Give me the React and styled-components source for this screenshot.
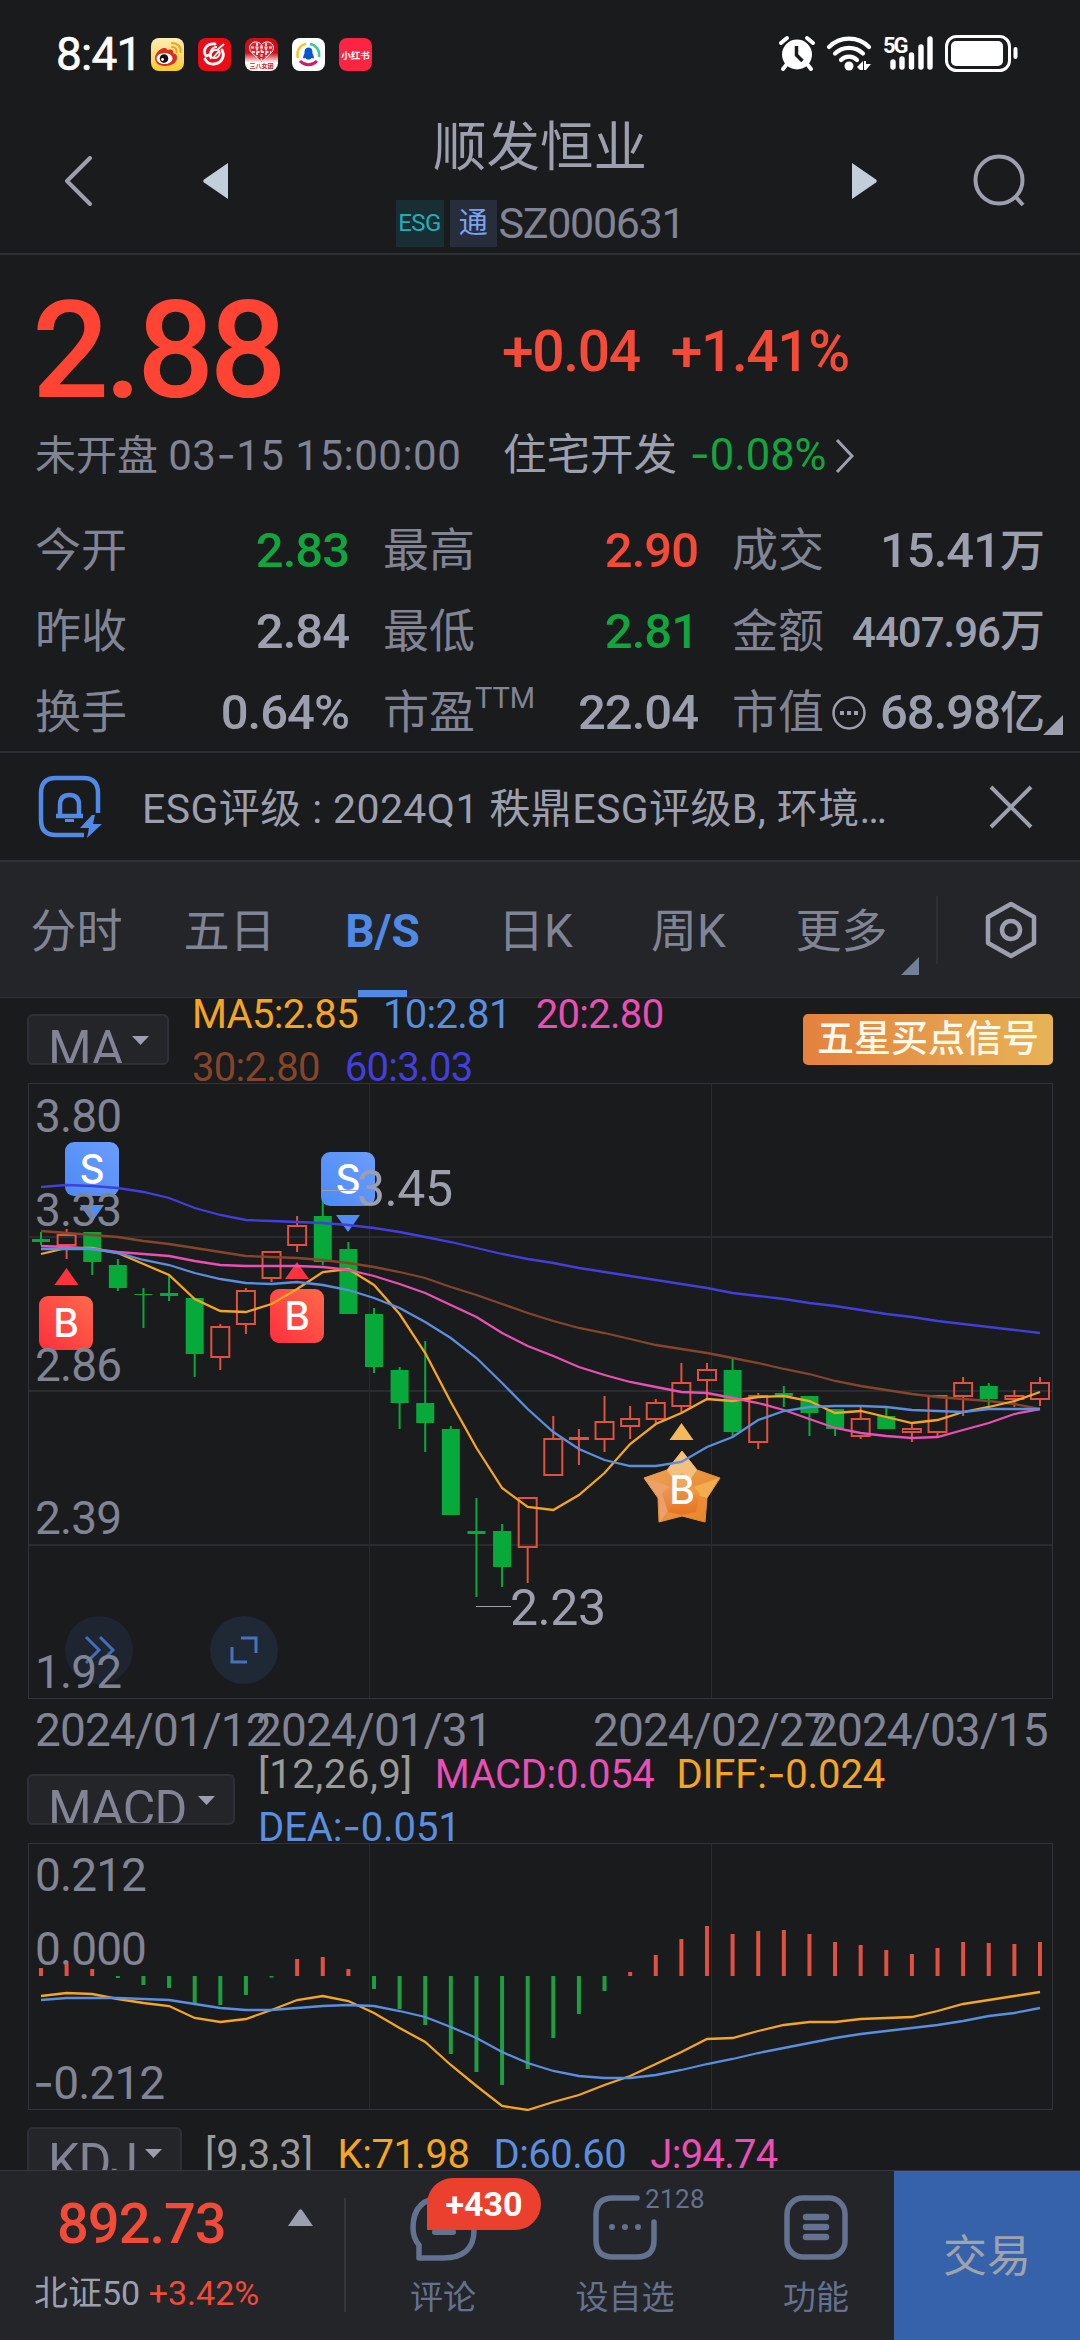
import React from "react";
import styled, { createGlobalStyle } from "styled-components";

const COLORS = {
  bg: "#1a1b1d",
  panel: "#232529",
  line: "#2e3036",
  label: "#808494",
  value: "#9c9fae",
  red: "#f44a38",
  green: "#13a53d",
  blue: "#5089e6",
  orange: "#f5a524",
  sky: "#5a8fdf",
  pink: "#e94fb4",
  brown: "#86452a",
  indigo: "#423fdc",
  slate: "#637290",
};

const FONT = 'Roboto, "Noto Sans CJK SC", sans-serif';

/* ---------- chart data ---------- */

const STEP = 25.615;
const xAt = (i) => 41 + i * STEP;

// [up, high, top, bottom, low]
const CANDLES = [
  [0, 1232, 1239, 1242, 1245],
  [1, 1229, 1234, 1246, 1259],
  [0, 1232, 1232, 1262, 1275],
  [0, 1259, 1265, 1288, 1291],
  [0, 1288, 1294, 1295, 1328],
  [0, 1275, 1293, 1296, 1301],
  [0, 1298, 1298, 1354, 1377],
  [1, 1324, 1326, 1358, 1370],
  [1, 1288, 1290, 1325, 1334],
  [1, 1251, 1251, 1279, 1282],
  [1, 1216, 1225, 1246, 1252],
  [0, 1186, 1216, 1262, 1265],
  [0, 1242, 1249, 1314, 1314],
  [0, 1308, 1314, 1367, 1373],
  [0, 1367, 1370, 1403, 1429],
  [0, 1341, 1403, 1423, 1452],
  [0, 1426, 1429, 1515, 1515],
  [0, 1498, 1531, 1534, 1597],
  [0, 1524, 1531, 1567, 1587],
  [1, 1497, 1497, 1548, 1583],
  [1, 1416, 1438, 1476, 1476],
  [1, 1429, 1437, 1440, 1465],
  [1, 1396, 1421, 1440, 1452],
  [1, 1406, 1418, 1427, 1439],
  [1, 1399, 1402, 1420, 1424],
  [1, 1363, 1382, 1407, 1412],
  [1, 1363, 1369, 1381, 1400],
  [0, 1357, 1370, 1432, 1437],
  [1, 1393, 1395, 1443, 1449],
  [0, 1386, 1393, 1396, 1407],
  [0, 1396, 1396, 1413, 1436],
  [0, 1409, 1409, 1429, 1436],
  [1, 1406, 1418, 1437, 1439],
  [0, 1407, 1416, 1429, 1429],
  [1, 1423, 1428, 1433, 1442],
  [1, 1395, 1395, 1433, 1436],
  [1, 1377, 1382, 1397, 1416],
  [0, 1383, 1386, 1399, 1407],
  [1, 1390, 1395, 1400, 1407],
  [1, 1377, 1382, 1400, 1406],
];

const AVERAGES = [
  {
    color: COLORS.indigo,
    ys: [1187, 1185, 1186, 1188, 1192, 1198, 1208, 1215, 1220, 1221, 1222, 1223, 1225, 1228, 1232, 1237, 1242, 1248, 1254, 1259, 1263, 1268, 1272, 1276, 1280, 1284, 1288, 1293, 1296, 1299, 1303, 1306, 1310, 1314, 1317, 1321, 1324, 1327, 1330, 1333],
  },
  {
    color: COLORS.brown,
    ys: [1231, 1233, 1235, 1237, 1241, 1244, 1248, 1252, 1256, 1257, 1258, 1260, 1263, 1267, 1272, 1278, 1287, 1295, 1304, 1313, 1321, 1328, 1333, 1339, 1345, 1349, 1353, 1358, 1363, 1369, 1374, 1381, 1386, 1390, 1394, 1397, 1399, 1401, 1404, 1409],
  },
  {
    color: COLORS.orange,
    ys: [1254, 1248, 1248, 1253, 1264, 1275, 1299, 1311, 1312, 1304, 1289, 1272, 1269, 1285, 1314, 1353, 1402, 1448, 1488, 1507, 1510, 1495, 1473, 1444, 1424, 1413, 1399, 1401, 1397, 1396, 1401, 1413, 1411, 1417, 1423, 1420, 1412, 1407, 1401, 1392],
  },
  {
    color: COLORS.pink,
    ys: [1246, 1247, 1249, 1252, 1254, 1256, 1261, 1265, 1266, 1266, 1266, 1267, 1270, 1276, 1284, 1293, 1305, 1317, 1333, 1346, 1356, 1367, 1375, 1382, 1387, 1392, 1393, 1398, 1403, 1410, 1419, 1428, 1433, 1436, 1438, 1437, 1430, 1423, 1414, 1409],
  },
  {
    color: COLORS.sky,
    ys: [1249, 1249, 1249, 1253, 1260, 1265, 1273, 1279, 1283, 1284, 1282, 1285, 1290, 1298, 1308, 1322, 1338, 1358, 1383, 1409, 1432, 1449, 1460, 1466, 1466, 1462, 1447, 1437, 1420, 1411, 1407, 1406, 1406, 1407, 1410, 1411, 1412, 1409, 1409, 1409],
  },
];

const MACD_ZERO = 1976;
const MACD_BARS = [1968, 1964, 1969, 1978, 1985, 1988, 2004, 2005, 1995, 1977.5, 1959, 1957, 1969, 1989, 2009, 2025, 2054, 2072, 2085, 2069, 2038, 2014, 1991, 1972, 1955, 1939, 1926, 1934, 1931, 1930, 1934, 1942, 1945, 1950, 1954, 1948, 1942, 1943, 1944, 1942];
const DIFF = [1996, 1993, 1994, 1999, 2003, 2006, 2018, 2022, 2019, 2010, 2000, 1996, 2001, 2013, 2028, 2042, 2065, 2086, 2106, 2110, 2102, 2095, 2085, 2076, 2064, 2052, 2039, 2038, 2031, 2025, 2022, 2022, 2019, 2018, 2017, 2011, 2004, 2000, 1996, 1992];
const DEA = [2000, 1998, 1998, 1998, 1999, 2000, 2004, 2008, 2010, 2010, 2008, 2006, 2005, 2006, 2011, 2017, 2027, 2038, 2052, 2063, 2071, 2076, 2078, 2078, 2075, 2070, 2064, 2059, 2053, 2048, 2043, 2038, 2034, 2031, 2028, 2025, 2021, 2016, 2013, 2008];

const toPoints = (ys) => ys.map((y, i) => `${xAt(i).toFixed(1)},${y}`).join(" ");

const STATS = [
  { label: "今开", value: "2.83", color: COLORS.green },
  { label: "最高", value: "2.90", color: COLORS.red },
  { label: "成交", value: "15.41", unit: "万" },
  { label: "昨收", value: "2.84" },
  { label: "最低", value: "2.81", color: COLORS.green },
  { label: "金额", value: "4407.96", unit: "万", small: true },
  { label: "换手", value: "0.64%" },
  { label: "市盈", sup: "TTM", value: "22.04" },
  { label: "市值", more: true, value: "68.98", unit: "亿" },
];

const TABS = ["分时", "五日", "B/S", "日K", "周K", "更多"];

/* ---------- status bar ---------- */

const AppIcons = () => (
  <AppIconRow>
    <svg width="33" height="33" viewBox="0 0 33 33">
      <defs>
        <linearGradient id="weibo" x1="0" y1="0" x2="0" y2="1">
          <stop offset="0" stopColor="#fdeebb" />
          <stop offset="1" stopColor="#fccb2d" />
        </linearGradient>
      </defs>
      <rect width="33" height="33" rx="8" fill="url(#weibo)" />
      <path d="M4 20c0-5 6-11 10-10 2 0 2 2 2 2 3-1 7-1 6 3 3 1 4 2 4 5 0 5-6 8-12 8S4 25 4 20z" fill="#dc2b21" />
      <ellipse cx="13.500" cy="20.500" rx="8" ry="5.600" fill="#fff" />
      <circle cx="13" cy="20.500" r="4.300" fill="#111" />
      <circle cx="11.500" cy="21.500" r="1.400" fill="#fff" />
      <path d="M21 5c5 0 9 3 8.500 9M21 9c3 0 5 2 4.500 5" fill="none" stroke="#f0a020" strokeWidth="2" strokeLinecap="round" />
    </svg>
    <svg width="33" height="33" viewBox="0 0 33 33">
      <rect width="33" height="33" rx="8" fill="#ec0c18" />
      <path d="M17 6C8 5 4 13 8 18l3-1M7 21c3 7 15 7 18-2 1-3 0-5-1-7" fill="none" stroke="#fff" strokeWidth="2.800" strokeLinecap="round" />
      <path d="M26 6 19 12c-6-1-8 7-4 8 5 1 8-4 6-7l-6 7M19 9c-6 0-9 7-6 12" fill="none" stroke="#fff" strokeWidth="1.800" />
    </svg>
    <svg width="33" height="33" viewBox="0 0 33 33">
      <defs>
        <linearGradient id="heart" x1="0" y1="0" x2="0" y2="1">
          <stop offset="0.450" stopColor="#cc0f18" />
          <stop offset="0.750" stopColor="#fff" />
        </linearGradient>
      </defs>
      <rect width="33" height="33" rx="8" fill="url(#heart)" />
      <path d="M16.500 24 6 14C1 7 10 0 16.500 6.500 23 0 32 7 27 14z" fill="#dc2430" stroke="#fff" strokeWidth="1" />
      <path d="M16.500 7v16M12 5v14M21 5v14M6 9.500h21M7 14h19" stroke="#ffe4e4" strokeWidth="1.800" strokeDasharray="3 1.500" />
      <text x="16.500" y="30" fontSize="6" fontWeight="700" textAnchor="middle" fill="#c2242b">三八女团</text>
    </svg>
    <svg width="33" height="33" viewBox="0 0 33 33">
      <rect width="33" height="33" rx="8" fill="#fff" />
      <path d="M6 20C4 13 8 7 14 6" fill="none" stroke="#f4c62f" strokeWidth="2.600" />
      <path d="M18 6c6 1 10 6 9 13" fill="none" stroke="#3ecb9b" strokeWidth="2.600" />
      <path d="M8 23c5 5 12 5 17 0" fill="none" stroke="#d4186c" strokeWidth="3" />
      <path d="M16.500 9.500c-4 0-4 4-4 6-1 2-2 4-1 5l2-.5c1 2 5 2 6 0l2 .5c1-1 0-3-1-5 0-2 0-6-4-6z" fill="#0b54d4" />
    </svg>
    <svg width="33" height="33" viewBox="0 0 33 33">
      <rect width="33" height="33" rx="8" fill="#fb2442" />
      <text x="16.500" y="20.500" fontSize="9.500" fontWeight="700" textAnchor="middle" fill="#fff">小红书</text>
    </svg>
  </AppIconRow>
);

const SystemIcons = () => (
  <svg width="240" height="40" viewBox="778 34 240 40">
    <circle cx="797" cy="54.500" r="15" fill="#fff" />
    <path d="M781 43l6-5M813 43l-6-5M787 64l-4 5M807 64l4 5" stroke="#fff" strokeWidth="4" strokeLinecap="round" />
    <path d="M796.500 46v9l6 6" fill="none" stroke={COLORS.bg} strokeWidth="3.500" />
    <path d="M829 47a28 28 0 0 1 40 0M835 53.500a20 20 0 0 1 28 0M841 60a11 11 0 0 1 16 0" fill="none" stroke="#fff" strokeWidth="4.200" strokeLinecap="round" />
    <circle cx="849" cy="66" r="4.500" fill="#fff" />
    <path d="M857 67l6-6v9h-3zM864 61h2v3l5 0-5 6h-2z" fill="#fff" />
    <Net x="883" y="53">5G</Net>
    <path d="M893 62v5M902 59v8M911.500 55v12M921 47v20M930 39v28" stroke="#fff" strokeWidth="5.400" strokeLinecap="round" />
    <rect x="946.500" y="36.500" width="63" height="34" rx="10" fill="none" stroke="#fff" strokeWidth="3" />
    <rect x="951" y="41" width="52" height="25" rx="5" fill="#fff" />
    <path d="M1015.500 49v8" stroke="#fff" strokeWidth="4" strokeLinecap="round" />
  </svg>
);

/* ---------- charts ---------- */

const Candle = ({ index, data }) => {
  const [up, high, top, bottom, low] = data;
  const x = xAt(index);
  if (up) {
    return (
      <g stroke="#e2513f" strokeWidth="2" fill="none">
        <path d={`M${x} ${high}V${top}M${x} ${bottom}V${low}`} />
        <rect x={x - 9} y={top + 1} width="18" height={Math.max(bottom - top - 2, 1)} />
      </g>
    );
  }
  return (
    <g fill="#07a93a">
      <rect x={x - 1} y={high} width="2" height={low - high} />
      <rect x={x - 9} y={top} width="18" height={bottom - top} />
    </g>
  );
};

const Signal = ({ kind, x, y, tipX, tipY }) => (
  <g>
    <path
      d={kind === "S" ? `M${tipX - 12} ${tipY - 16}h24l-12 17z` : `M${tipX - 12} ${tipY + 17}h24l-12 -17z`}
      fill={kind === "S" ? "#4f8ef0" : "#ff333d"}
    />
    <rect x={x} y={y} width="54" height="54" rx="9" fill={`url(#signal${kind})`} />
    <SignalText x={x + 27} y={y + 41}>
      {kind}
    </SignalText>
  </g>
);

const PriceChart = () => (
  <Chart width="1080" height="675" viewBox="0 1083 1080 675">
    <defs>
      <linearGradient id="signalS" x1="1" y1="0" x2="0" y2="1">
        <stop offset="0" stopColor="#6b9dfb" />
        <stop offset="1" stopColor="#4c8af5" />
      </linearGradient>
      <linearGradient id="signalB" x1="1" y1="0" x2="0" y2="1">
        <stop offset="0" stopColor="#ff6a4c" />
        <stop offset="1" stopColor="#ff2e3c" />
      </linearGradient>
      <linearGradient id="star" x1="0" y1="0" x2="1" y2="1">
        <stop offset="0" stopColor="#eea45c" />
        <stop offset="1" stopColor="#e88426" />
      </linearGradient>
      <linearGradient id="starCore" x1="0" y1="0" x2="0" y2="1">
        <stop offset="0" stopColor="#efae62" />
        <stop offset="1" stopColor="#e5691a" />
      </linearGradient>
    </defs>
    <g stroke="#292b30" fill="none">
      <path d="M28 1237h1025M28 1391h1025M28 1545h1025" strokeWidth="2" />
      <path d="M369.500 1084v614M711.500 1084v614" />
      <rect x="28.500" y="1083.500" width="1024" height="615" stroke="#313338" />
    </g>
    <circle cx="99" cy="1650" r="34" fill="#1e2430" />
    <path d="M86 1637l13 13-13 13M100 1637l13 13-13 13" fill="none" stroke="#416fb9" strokeWidth="3" />
    <circle cx="244" cy="1650" r="34" fill="#1f2936" />
    <path d="M241 1638h15v15M232 1647v15h15" fill="none" stroke="#4474bd" strokeWidth="3" />
    {CANDLES.map((data, i) => (
      <Candle key={i} index={i} data={data} />
    ))}
    <Signal kind="S" x={65} y={1142} tipX={92} tipY={1221} />
    <Signal kind="S" x={321} y={1152} tipX={348} tipY={1231} />
    <Signal kind="B" x={39} y={1296} tipX={66.500} tipY={1268} />
    <Signal kind="B" x={270} y={1289} tipX={297} tipY={1262} />
    <path d="M669.500 1440h24l-12-17z" fill="#f5b85a" />
    <path d="M682 1451l15 19 23 8-13 20-2 24-23-6-23 6-1-24-14-20 23-8z" fill="url(#star)" stroke="url(#star)" strokeLinejoin="round" />
    <path d="M682 1451l15 19-15 21-15-21z" fill="#f3c07e" />
    <path d="M645 1478l37 13-22 31-1-24z" fill="#eca06a" />
    <path d="M719 1478l-37 13 25 7z" fill="#f2ae4c" />
    <path d="M682 1472l18 22-4 18-14 3-14-3-6-18z" fill="url(#starCore)" opacity="0.700" />
    <SignalText x="682" y="1504">B</SignalText>
    <g fill="none" strokeWidth="2.300">
      {AVERAGES.map((line) => (
        <polyline key={line.color} points={toPoints(line.ys)} stroke={line.color} />
      ))}
    </g>
    <path d="M322 1190.500h36M476 1606.500h35" stroke={COLORS.value} />
    <MarkText x="357" y="1206">3.45</MarkText>
    <MarkText x="510" y="1625">2.23</MarkText>
    <AxisText x="35" y="1132">3.80</AxisText>
    <AxisText x="35" y="1226">3.33</AxisText>
    <AxisText x="35" y="1381">2.86</AxisText>
    <AxisText x="35" y="1534">2.39</AxisText>
    <AxisText x="35" y="1688">1.92</AxisText>
    <AxisText x="35" y="1746">2024/01/12</AxisText>
    <AxisText x="256" y="1746">2024/01/31</AxisText>
    <AxisText x="593" y="1746">2024/02/27</AxisText>
    <AxisText x="812" y="1746">2024/03/15</AxisText>
  </Chart>
);

const MacdChart = () => (
  <Chart width="1080" height="268" viewBox="0 1843 1080 268">
    <g stroke="#292b30" fill="none">
      <path d="M369.500 1843v266M711.500 1843v266" />
      <rect x="28.500" y="1843.500" width="1024" height="266" stroke="#313338" />
    </g>
    <AxisText x="35" y="1891">0.212</AxisText>
    <AxisText x="35" y="1965">0.000</AxisText>
    <AxisText x="33" y="2099">
      <MinusSpan>-</MinusSpan>0.212
    </AxisText>
    {MACD_BARS.map((y, i) => (
      <rect
        key={i}
        x={xAt(i) - 2}
        y={Math.min(y, MACD_ZERO)}
        width="4"
        height={Math.abs(y - MACD_ZERO)}
        fill={y < MACD_ZERO ? "#e2503f" : "#1d9f40"}
      />
    ))}
    <polyline points={toPoints(DIFF)} fill="none" stroke={COLORS.orange} strokeWidth="2.300" />
    <polyline points={toPoints(DEA)} fill="none" stroke={COLORS.sky} strokeWidth="2.300" />
  </Chart>
);

const Indicator = ({ name, width, children }) => (
  <IndicatorRow>
    <IndicatorSelect $width={width}>
      {name}
      <svg width="17" height="9" viewBox="0 0 17 9">
        <path d="M0 0h17L8.500 9z" fill={COLORS.value} />
      </svg>
    </IndicatorSelect>
    {children}
  </IndicatorRow>
);

const App = () => (
  <>
    <GlobalStyle />
    <Page>
      <StatusBar>
        <Clock>8:41</Clock>
        <AppIcons />
        <SystemIcons />
      </StatusBar>

      <Header>
        <svg width="28" height="50" viewBox="0 0 28 50">
          <path d="M26 2 3 25l23 23" fill="none" stroke={COLORS.value} strokeWidth="4" strokeLinecap="round" strokeLinejoin="round" />
        </svg>
        <PrevStock width="25" height="36" viewBox="0 0 25 36">
          <path d="M25 0v36L1 19.500q-1.500-1.500 0-3z" fill="#c3cedb" />
        </PrevStock>
        <Title>
          <StockName>顺发恒业</StockName>
          <CodeRow>
            <EsgTag>ESG</EsgTag>
            <LinkTag>通</LinkTag>
            <Code>SZ000631</Code>
          </CodeRow>
        </Title>
        <NextStock width="25" height="36" viewBox="0 0 25 36">
          <path d="M0 0v36l24-16.500q1.500-1.500 0-3z" fill="#c3cedb" />
        </NextStock>
        <svg width="53" height="53" viewBox="0 0 53 53">
          <circle cx="26" cy="26" r="23.500" fill="none" stroke={COLORS.value} strokeWidth="4" />
          <path d="M42 42l8 9" stroke={COLORS.value} strokeWidth="4" />
        </svg>
      </Header>

      <Summary>
        <QuoteRow>
          <Price>2.88</Price>
          <Change>
            <span>+0.04</span>
            <span>+1.41%</span>
          </Change>
        </QuoteRow>
        <SessionRow>
          <Session>
            未开盘{" "}
            <span>
              03<Minus>-</Minus>15 15:00:00
            </span>
          </Session>
          <Sector>
            住宅开发{" "}
            <span>
              <Minus>-</Minus>0.08%
            </span>
          </Sector>
          <svg width="20" height="34" viewBox="0 0 20 34">
            <path d="M2 1l15 16L2 33" fill="none" stroke={COLORS.value} strokeWidth="3" />
          </svg>
        </SessionRow>
        <StatGrid>
          {STATS.map((stat) => (
            <Stat key={stat.label}>
              <StatLabel>
                {stat.label}
                {stat.sup && <sup>{stat.sup}</sup>}
                {stat.more && (
                  <svg width="36" height="36" viewBox="0 0 36 36">
                    <circle cx="18" cy="18" r="15.500" fill="none" stroke={COLORS.value} strokeWidth="2.500" />
                    <path d="M9 18h4M16 18h4M23 18h4" stroke={COLORS.value} strokeWidth="4" />
                  </svg>
                )}
              </StatLabel>
              <StatValue $color={stat.color} $small={stat.small}>
                {stat.value}
                {stat.unit && <em>{stat.unit}</em>}
              </StatValue>
            </Stat>
          ))}
        </StatGrid>
        <ExpandCorner />
      </Summary>

      <Notice>
        <svg width="65" height="64" viewBox="0 0 65 64">
          <g fill="none" stroke={COLORS.blue} strokeWidth="4.500">
            <path d="M60 38V18Q60 3 45 3H18Q3 3 3 18v27q0 15 15 15h28" strokeLinejoin="round" />
            <path d="M22 40V30q0-10 9.500-10t9.500 10v10M18 41h27" strokeWidth="4.500" />
            <path d="M27 45.500h9" strokeWidth="3" />
          </g>
          <path d="M54 40 42 53h9l-2 10 15-14h-9l2-9z" fill={COLORS.blue} />
        </svg>
        <NoticeText>ESG评级 : 2024Q1 秩鼎ESG评级B, 环境…</NoticeText>
        <svg width="44" height="44" viewBox="0 0 44 44">
          <path d="M2 2l40 40M42 2 2 42" stroke={COLORS.value} strokeWidth="4" />
        </svg>
      </Notice>

      <TabBar>
        {TABS.map((tab) => (
          <Tab key={tab} $active={tab === "B/S"}>
            {tab}
          </Tab>
        ))}
        <MoreCorner />
        <TabDivider />
        <svg width="52" height="58" viewBox="0 0 52 58">
          <path d="M26 3l23 13v26L26 55 3 42V16z" fill="none" stroke={COLORS.value} strokeWidth="4.500" strokeLinejoin="round" />
          <circle cx="26" cy="29" r="9" fill="none" stroke={COLORS.value} strokeWidth="4.500" />
        </svg>
      </TabBar>

      <Charts>
        <Indicator name="MA" width={142}>
          <Legend $width={560} $gap={25}>
            <LegendItem $color={COLORS.orange}>MA5:2.85</LegendItem>
            <LegendItem $color={COLORS.sky}>10:2.81</LegendItem>
            <LegendItem $color={COLORS.pink}>20:2.80</LegendItem>
            <LegendItem $color={COLORS.brown}>30:2.80</LegendItem>
            <LegendItem $color={COLORS.indigo}>60:3.03</LegendItem>
          </Legend>
          <SignalBadge>五星买点信号</SignalBadge>
        </Indicator>
        <PriceChart />
        <Indicator name="MACD" width={208}>
          <Legend $width={700} $gap={22}>
            <LegendItem $color="#9b9b9b" $spacing={0.6}>[12,26,9]</LegendItem>
            <LegendItem $color={COLORS.pink} $spacing={-0.4}>MACD:0.054</LegendItem>
            <LegendItem $color={COLORS.orange} $spacing={-0.1}>
              DIFF:<Minus>-</Minus>0.024
            </LegendItem>
            <LegendItem $color={COLORS.sky} $spacing={-0.1}>
              DEA:<Minus>-</Minus>0.051
            </LegendItem>
          </Legend>
        </Indicator>
        <MacdChart />
        <Indicator name="KDJ" width={155}>
          <Legend $width={760} $gap={24}>
            <LegendItem $color="#9b9b9b" $spacing={0.6}>[9,3,3]</LegendItem>
            <LegendItem $color={COLORS.orange} $spacing={-0.5}>K:71.98</LegendItem>
            <LegendItem $color={COLORS.sky} $spacing={-0.5}>D:60.60</LegendItem>
            <LegendItem $color={COLORS.pink} $spacing={-0.7}>J:94.74</LegendItem>
          </Legend>
        </Indicator>
      </Charts>

      <BottomBar>
        <IndexBlock>
          <IndexTop>
            <IndexValue>892.73</IndexValue>
            <svg width="25" height="17" viewBox="0 0 25 17">
              <path d="M0 17h25L14 1q-1.500-1.500-3 0z" fill={COLORS.value} />
            </svg>
          </IndexTop>
          <IndexName>
            北证50 <span>+3.42%</span>
          </IndexName>
        </IndexBlock>
        <NavItem>
          <svg width="67" height="68" viewBox="0 0 67 68">
            <path d="M9 63V50Q3 43 3 33 3 3 33 3t31 30-31 30z" fill="none" stroke={COLORS.slate} strokeWidth="5.500" strokeLinejoin="round" />
            <path d="M25 37h18" stroke={COLORS.slate} strokeWidth="6" strokeLinecap="round" />
          </svg>
          <NavLabel>评论</NavLabel>
          <CommentBadge>+430</CommentBadge>
        </NavItem>
        <NavItem>
          <svg width="64" height="68" viewBox="0 0 64 68">
            <path d="M44 3H20Q3 3 3 20v25q0 17 17 17h24q17 0 17-17V27" fill="none" stroke={COLORS.slate} strokeWidth="5.500" strokeLinecap="round" />
            <path d="M19 32h0M32 32h0M45 32h0" stroke={COLORS.slate} strokeWidth="6" strokeLinecap="round" />
          </svg>
          <NavLabel>设自选</NavLabel>
          <FollowCount>2128</FollowCount>
        </NavItem>
        <NavItem>
          <svg width="64" height="68" viewBox="0 0 64 68">
            <rect x="3" y="3" width="58" height="59" rx="16" fill="none" stroke={COLORS.slate} strokeWidth="5.500" />
            <path d="M22 22h20M22 32h20M22 42h20" stroke={COLORS.slate} strokeWidth="6.500" strokeLinecap="round" />
          </svg>
          <NavLabel>功能</NavLabel>
        </NavItem>
        <TradeButton>交易</TradeButton>
      </BottomBar>
    </Page>
  </>
);

/* ---------- styles ---------- */

const GlobalStyle = createGlobalStyle`
  * {
    box-sizing: border-box;
  }
  body {
    margin: 0;
    background: ${COLORS.bg};
    font-family: ${FONT};
  }
  svg {
    display: block;
    flex-shrink: 0;
  }
  text {
    font-family: ${FONT};
  }
`;

const Page = styled.div`
  display: flex;
  flex-direction: column;
  width: 1080px;
  height: 2340px;
  overflow: hidden;
  background: ${COLORS.bg};
  white-space: nowrap;
`;

// Roboto's hyphen is too short for a minus sign
const Minus = styled.b`
  font-family: Inter, sans-serif;
  font-weight: 400;
  line-height: 0;
`;

const MinusSpan = styled.tspan`
  font-family: Inter, sans-serif;
`;

const StatusBar = styled.div`
  display: flex;
  align-items: center;
  height: 108px;
  padding: 0 62px 0 56px;
`;

const Clock = styled.div`
  width: 95px;
  font-size: 46px;
  letter-spacing: -0.800px;
  color: #fff;
  -webkit-text-stroke: 0.600px #fff;
`;

const AppIconRow = styled.div`
  display: flex;
  flex: 1;
  gap: 14px;
`;

const Net = styled.text`
  font-size: 22px;
  font-weight: 700;
  letter-spacing: -2px;
  fill: #fff;
`;

const Header = styled.div`
  display: flex;
  align-items: center;
  height: 147px;
  padding: 0 54px 0 64px;
  border-bottom: 2px solid ${COLORS.line};
`;

const PrevStock = styled.svg`
  margin-left: 111px;
`;

const NextStock = styled.svg`
  margin-right: 96px;
`;

const Title = styled.div`
  display: flex;
  flex: 1;
  flex-direction: column;
  align-items: center;
  align-self: stretch;
  padding-top: 4px;
`;

const StockName = styled.div`
  height: 88px;
  line-height: 72px;
  font-size: 53.500px;
  color: ${COLORS.value};
`;

const CodeRow = styled.div`
  display: flex;
  gap: 6px;
  line-height: 47px;
`;

const EsgTag = styled.span`
  width: 48px;
  height: 47px;
  background: #182e32;
  color: #23adbb;
  font-size: 24px;
  letter-spacing: -0.500px;
  text-align: center;
`;

const LinkTag = styled(EsgTag)`
  width: 47px;
  background: #262d3b;
  color: #7da3ef;
  font-size: 29px;
`;

const Code = styled.span`
  margin-left: -4px;
  font-size: 43px;
  letter-spacing: -1.300px;
  color: ${COLORS.label};
`;

const Summary = styled.div`
  position: relative;
  height: 498px;
  padding: 28px 35px 0;
  border-bottom: 2px solid ${COLORS.line};
`;

const QuoteRow = styled.div`
  display: grid;
  grid-template-columns: 467px 1fr;
  height: 138px;
`;

const Price = styled.div`
  margin-left: -3px;
  font-size: 136px;
  font-weight: 500;
  line-height: 136px;
  letter-spacing: -5px;
  color: #ff4433;
`;

const Change = styled.div`
  display: flex;
  gap: 31px;
  margin-top: 40px;
  font-size: 57px;
  font-weight: 500;
  line-height: 57px;
  letter-spacing: -1.400px;
  color: ${COLORS.red};
`;

const SessionRow = styled.div`
  display: flex;
  align-items: center;
  height: 70px;
  line-height: 70px;
  font-size: 42px;
`;

const Session = styled.div`
  width: 468px;
  font-size: 41px;
  color: ${COLORS.label};

  span {
    font-size: 42px;
    letter-spacing: 0.500px;
  }
`;

const Sector = styled.div`
  margin-right: 8px;
  font-size: 43.500px;
  color: ${COLORS.value};

  span {
    margin-left: 2px;
    color: ${COLORS.green};
  }
`;

const StatGrid = styled.div`
  display: grid;
  grid-template-columns: 314px 315px 313px;
  grid-auto-rows: 81px;
  column-gap: 34px;
  margin-top: 19px;
`;

const Stat = styled.div`
  display: flex;
  justify-content: space-between;
  line-height: 81px;
`;

const StatLabel = styled.div`
  display: flex;
  align-items: center;
  font-size: 46px;
  color: ${COLORS.label};

  sup {
    align-self: flex-start;
    font-size: 29px;
    line-height: 52px;
  }

  svg {
    margin-left: 7px;
  }
`;

const StatValue = styled.div`
  font-size: ${({ $small }) => ($small ? 42 : 49)}px;
  font-weight: 500;
  letter-spacing: -1px;
  color: ${({ $color }) => $color || COLORS.value};

  em {
    font-size: 45px;
    font-style: normal;
    letter-spacing: 0;
  }
`;

const ExpandCorner = styled.i`
  position: absolute;
  right: 17px;
  bottom: 16px;
  border-left: 20px solid transparent;
  border-bottom: 20px solid ${COLORS.value};
`;

const Notice = styled.div`
  display: flex;
  align-items: center;
  height: 109px;
  padding: 0 47px 0 38px;
  border-bottom: 2px solid ${COLORS.line};
`;

const NoticeText = styled.div`
  flex: 1;
  padding: 0 0 3px 39px;
  font-size: 41px;
  letter-spacing: 0.400px;
  color: ${COLORS.value};
`;

const TabBar = styled.div`
  position: relative;
  display: flex;
  align-items: center;
  height: 136px;
  padding: 0 43px 0 0;
  background: ${COLORS.panel};
  border-bottom: 1px solid ${COLORS.line};
`;

const Tab = styled.div`
  position: relative;
  width: 153px;
  height: 100%;
  line-height: 139px;
  font-size: 46px;
  text-align: center;
  color: ${({ $active }) => ($active ? COLORS.blue : COLORS.label)};
  font-weight: ${({ $active }) => ($active ? 700 : 400)};

  &::after {
    content: "";
    position: absolute;
    bottom: 0;
    left: calc(50% - 24.5px);
    width: 49px;
    height: 7px;
    background: ${({ $active }) => ($active ? COLORS.blue : "none")};
  }
`;

const MoreCorner = styled.i`
  position: absolute;
  left: 901px;
  top: 95px;
  border-left: 18px solid transparent;
  border-bottom: 18px solid #73809a;
`;

const TabDivider = styled.div`
  width: 2px;
  height: 68px;
  margin: 0 auto 0 18px;
  background: ${COLORS.line};
`;

const Charts = styled.div`
  height: 1172px;
  overflow: hidden;
`;

const Chart = styled.svg`
  overflow: hidden;
`;

const AxisText = styled.text`
  font-size: 46px;
  letter-spacing: -0.900px;
  fill: ${COLORS.label};
`;

const MarkText = styled.text`
  font-size: 50px;
  letter-spacing: -0.500px;
  fill: ${COLORS.value};
`;

const SignalText = styled.text`
  && {
    font-family: Inter, sans-serif;
  }
  font-size: 39px;
  font-weight: 500;
  text-anchor: middle;
  fill: #fff;
`;

const IndicatorRow = styled.div`
  display: flex;
  align-items: center;
  height: 85px;
  padding: 0 27px;
`;

const IndicatorSelect = styled.div`
  display: flex;
  flex-shrink: 0;
  justify-content: space-between;
  width: ${({ $width }) => $width}px;
  height: 51px;
  margin: 0 23px 2px 0;
  padding: 0 18px 0 19px;
  overflow: hidden;
  background: ${COLORS.panel};
  border: 2px solid ${COLORS.line};
  border-radius: 6px;
  font-size: 50px;
  line-height: 66px;
  letter-spacing: -0.800px;
  color: ${COLORS.label};

  svg {
    margin-top: 20px;
  }
`;

const Legend = styled.div`
  display: flex;
  flex-wrap: wrap;
  column-gap: ${({ $gap }) => $gap}px;
  width: ${({ $width }) => $width}px;
  padding-top: 1px;
`;

const LegendItem = styled.span`
  font-size: 40px;
  line-height: 53px;
  letter-spacing: ${({ $spacing = -0.7 }) => $spacing}px;
  color: ${({ $color }) => $color};
`;

const SignalBadge = styled.div`
  width: 250px;
  height: 51px;
  margin: 0 0 2px auto;
  border-radius: 5px;
  background: linear-gradient(90deg, #e4813f, #e7b356);
  color: #fff9ea;
  font-size: 37px;
  font-weight: 500;
  line-height: 52px;
  text-align: center;
`;

const BottomBar = styled.div`
  display: grid;
  grid-template-columns: 346px 194px 170px 184px 186px;
  height: 170px;
  background: ${COLORS.panel};
  border-top: 1px solid #33363c;
`;

const IndexBlock = styled.div`
  height: 114px;
  margin-top: 27px;
  padding-left: 34px;
  border-right: 2px solid #33363c;
`;

const IndexTop = styled.div`
  display: flex;
  gap: 64px;
  padding: 0 0 0 23px;

  svg {
    margin-top: 11px;
  }
`;

const IndexValue = styled.div`
  width: 167px;
  font-size: 56px;
  font-weight: 500;
  line-height: 52px;
  letter-spacing: -1px;
  color: ${COLORS.red};
`;

const IndexName = styled.div`
  margin-top: 21px;
  font-size: 34px;
  line-height: 44px;
  color: ${COLORS.value};

  span {
    color: ${COLORS.red};
  }
`;

const NavItem = styled.div`
  position: relative;
  display: flex;
  flex-direction: column;
  align-items: center;
  padding-top: 24px;

  &:nth-child(4) {
    padding-left: 28px;
  }
`;

const NavLabel = styled.div`
  margin-top: 12px;
  font-size: 33px;
  line-height: 46px;
  color: ${COLORS.slate};
`;

const CommentBadge = styled.div`
  position: absolute;
  top: 7px;
  left: 81px;
  width: 114px;
  height: 52px;
  border-radius: 26px 26px 26px 0;
  background: #eb402e;
  color: #fff;
  font-size: 34px;
  font-weight: 700;
  line-height: 53px;
  text-align: center;
`;

const FollowCount = styled.div`
  position: absolute;
  top: 12px;
  left: 105px;
  font-size: 26px;
  line-height: 32px;
  letter-spacing: 0.400px;
  color: ${COLORS.slate};
`;

const TradeButton = styled.div`
  background: #3662ab;
  color: #a0a3ac;
  font-size: 44px;
  line-height: 172px;
  text-align: center;
`;

export default App;
